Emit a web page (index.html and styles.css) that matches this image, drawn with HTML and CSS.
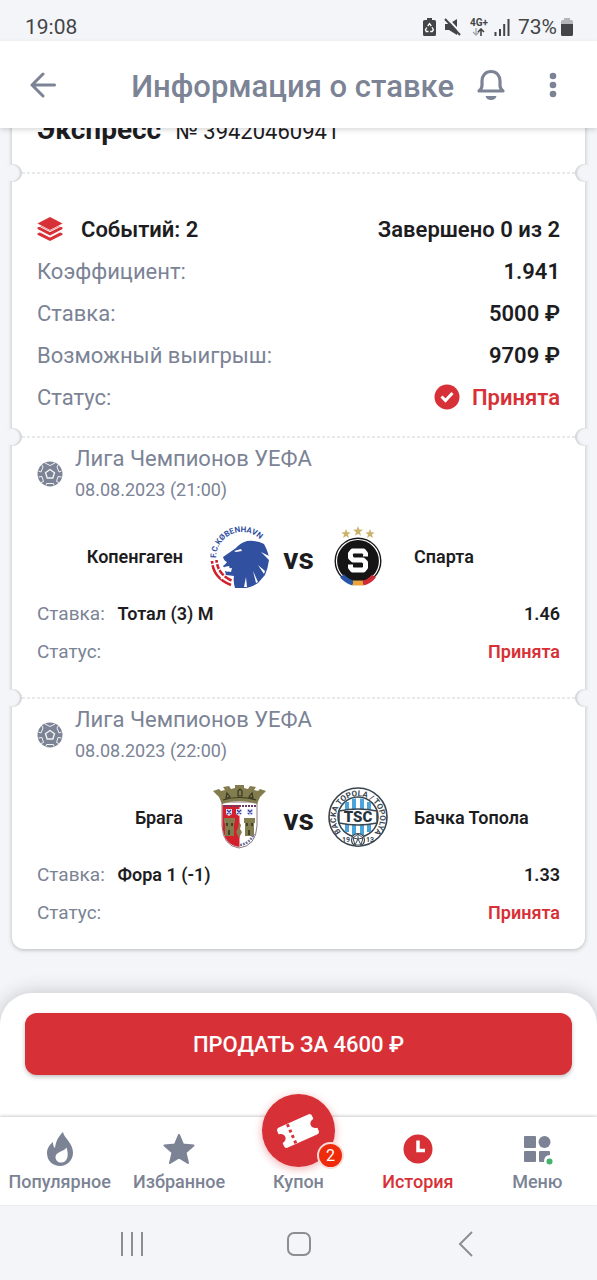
FILE: index.html
```html
<!DOCTYPE html>
<html lang="ru">
<head>
  <meta charset="UTF-8">
  <meta name="viewport" content="width=device-width, initial-scale=1.0">
  <title>Информация о ставке</title>
  <link rel="stylesheet" href="styles.css">
</head>
<body>
  <div class="status-bar">
    <span class="time">19:08</span>
    <div class="status-icons">
      <svg width="13" height="18" viewBox="0 0 13 18">
        <path d="M4 0h5v2h2.500q1.500 0 1.500 1.500v13q0 1.500-1.500 1.500h-10q-1.500 0-1.500-1.500v-13q0-1.500 1.500-1.500h2.500z" fill="#444547"/>
        <path d="M4.700 8l1.800-2.500 1.800 2.500M9 9.300l1.400 2.700-1.200 1.500h-2M5.500 13.500h-2.200l-.8-1.700 1.300-2.300" fill="none" stroke="#fff" stroke-width="1.300"/>
      </svg>
      <svg class="mute" width="18" height="18" viewBox="0 0 18 18">
        <path d="M1 6h4l8-5v16l-8-5h-4z" fill="#444547"/>
        <path d="M3 0l16 17" stroke="#f3f5f8" stroke-width="2"/>
        <path d="M1 1l15 16" stroke="#444547" stroke-width="2"/>
      </svg>
      <div class="network">
        <span>4G+</span>
        <svg width="13" height="8" viewBox="0 0 13 8">
          <path d="M4 0v7M1 4l3 3 3-3" fill="none" stroke="#a3a5a8" stroke-width="1.300"/>
          <path d="M9 8v-7M6 4l3-3 3 3" fill="none" stroke="#444547" stroke-width="1.600"/>
        </svg>
      </div>
      <svg class="signal" width="16" height="17" viewBox="0 0 16 17">
        <path d="M1.500 17v-4M6 17v-7M10.200 17v-12M14.500 17v-17" stroke="#444547" stroke-width="2"/>
      </svg>
      <span class="percent">73%</span>
      <svg class="battery" width="12" height="18" viewBox="0 0 12 18">
        <path d="M3 0h6v2h1.500q1.500 0 1.500 1.500v4h-12v-4q0-1.500 1.500-1.500h1.500z" fill="#b4b6b9"/>
        <path d="M0 6h12v10.500q0 1.500-1.500 1.500h-9q-1.500 0-1.500-1.500z" fill="#444547"/>
      </svg>
    </div>
  </div>

  <header class="header">
    <button class="icon-btn" aria-label="Назад">
      <svg width="26" height="26" viewBox="0 0 26 26" fill="none" stroke="#7b8395" stroke-width="3" stroke-linecap="round" stroke-linejoin="round"><path d="M24.500 13h-22.500M13 2l-11 11 11 11"/></svg>
    </button>
    <h1>Информация о ставке</h1>
    <button class="icon-btn" aria-label="Уведомления">
      <svg width="30" height="32" viewBox="0 0 30 32">
        <path d="M15 2.500c-5.500 0-9 4.200-9 9.500v4.500c0 2.500-1.200 4-3 5.500h24c-1.800-1.500-3-3-3-5.500v-4.500c0-5.300-3.500-9.500-9-9.500z" fill="none" stroke="#7b8395" stroke-width="3.200" stroke-linejoin="round"/>
        <path d="M9.500 27h11q-1 4-5.500 4t-5.500-4z" fill="#7b8395"/>
      </svg>
    </button>
    <button class="icon-btn dots" aria-label="Ещё">
      <svg width="8" height="26" viewBox="0 0 8 26" fill="#7b8395"><circle cx="4" cy="4" r="3.300"/><circle cx="4" cy="13" r="3.300"/><circle cx="4" cy="22" r="3.300"/></svg>
    </button>
  </header>

  <main class="content">
    <article class="ticket">
      <div class="ticket-head">
        <h2>Экспресс</h2>
        <span>№ 39420460941</span>
      </div>

      <section class="part summary">
        <div class="row">
          <strong class="events">
            <svg width="26" height="26" viewBox="0 0 26 26" fill="#d73137">
              <path d="M13 1l12.500 6.500-12.500 6.500-12.500-6.500z"/>
              <path d="M.5 11.500l3.500-1.500 9 4.800 9-4.800 3.500 1.500v1.500l-12.500 6.500-12.500-6.500z"/>
              <path d="M.5 17.500l3-1.500 9.500 5 9.500-5 3 1.500v1.200l-12.500 6.300-12.500-6.300z"/>
              <path d="M0 9l13 6.600 13-6.600M0 14.500l13 6.600 13-6.600" fill="none" stroke="#fff"/>
            </svg>
            Событий: 2
          </strong>
          <strong>Завершено 0 из 2</strong>
        </div>
        <div class="row"><span>Коэффициент:</span><strong>1.941</strong></div>
        <div class="row"><span>Ставка:</span><strong>5000 ₽</strong></div>
        <div class="row"><span>Возможный выигрыш:</span><strong>9709 ₽</strong></div>
        <div class="row">
          <span>Статус:</span>
          <strong class="accepted">
            <svg width="26" height="26" viewBox="0 0 26 26"><circle cx="13" cy="13" r="12.500" fill="#d73137"/><path d="M7.500 12.500l4 4 7-7.500" fill="none" stroke="#fff" stroke-width="3"/></svg>
            Принята
          </strong>
        </div>
      </section>

      <section class="part event">
        <div class="league">
          <svg width="26" height="26" viewBox="0 0 26 26">
            <circle cx="13" cy="13" r="12.500" fill="#7b8395"/>
            <path d="M13 8.500l4.500 3.300-1.700 5.200h-5.600l-1.700-5.200z" fill="none" stroke="#f1f2f4" stroke-width="1.400"/>
            <path d="M8 2l5 2.500 5-2.500M1.500 10l2.500 1 2-5-1-2M24.500 10l-2.500 1-2-5 1-2M4 21.500l2.500-1-1.500-5-3.500.5M22 21.500l-2.500-1 1.500-5 3.500.5M9 24.500l.5-2h7l.5 2" fill="none" stroke="#f1f2f4"/>
          </svg>
          <div>
            <h3>Лига Чемпионов УЕФА</h3>
            <time datetime="2023-08-08T21:00">08.08.2023 (21:00)</time>
          </div>
        </div>
        <div class="teams">
          <span class="home">Копенгаген</span>
          <svg class="logo" viewBox="0 0 60 62">
            <path id="arc-fck" d="M7 33A26 26 0 0 1 59 33" fill="none"/>
            <text font-size="8" font-weight="700" fill="#31509f"><textPath href="#arc-fck">F.C.KØBENHAVN</textPath></text>
            <path d="M3 36q1 17 19 24M7.500 35q1 14 15 20.500" fill="none" stroke="#cf222d" stroke-width="2.600"/>
            <path d="M8 46l6-4M1 40l9-2M12 54l5-5" stroke="#fff" stroke-width="1.500"/>
            <g transform="translate(0 3)">
              <path d="M27 20q4-5 11-7 10-1 17 3 5 9 5 16-1 8-4 15l-7 8q-8 5-13 5h-10q-2-7-1-12l-8-1-1-4 6 1 1-4q-8 1-9-2 3-2 4-4-3-1-4-5z" fill="#31509f"/>
              <path d="M25 23l7-2 1 2-6 1zM60 28l-8-4 8 8zM56 43l-7-6 6 9zM49 54l-5-11 3 12zM38 59l-1-10-2 10zM15 39l5-1 1 3-3 3z" fill="#fff"/>
            </g>
          </svg>
          <span class="vs">vs</span>
          <svg class="logo" viewBox="0 0 60 62">
            <path d="M30 1l1.300 3.500 3.700.2-3 2.300 1 3.700-3-2-3 2 1-3.700-3-2.300 3.700-.2zM18 4l1.300 3.200 3.400.2-2.700 2.200.9 3.400-2.900-2-2.900 2 .9-3.400-2.700-2.200 3.400-.2zM42 4l1.300 3.200 3.400.2-2.700 2.200.9 3.400-2.900-2-2.900 2 .9-3.400-2.700-2.200 3.400-.2z" fill="#cbb26a"/>
            <circle cx="30" cy="36" r="23.500" fill="#151515"/>
            <circle cx="30" cy="36" r="21.500" fill="none" stroke="#fff" stroke-width="1.200"/>
            <path d="M14 51q6 6 11 7" fill="none" stroke="#2855a5" stroke-width="5"/>
            <path d="M25 58h10" stroke="#eba43a" stroke-width="5"/>
            <path d="M35 58q6-1 11-7" fill="none" stroke="#cf2b36" stroke-width="5"/>
            <path d="M37.500 31.500v-3l-2-2.500h-11l-2 2.500v4l2.500 2.500h10l2.500 2.500v5l-2 2.500h-11l-2-2.500v-3" fill="none" stroke="#fff" stroke-width="5" stroke-linejoin="round"/>
          </svg>
          <span class="away">Спарта</span>
        </div>
        <div class="row"><span>Ставка: <strong class="pick">Тотал (3) М</strong></span><strong>1.46</strong></div>
        <div class="row"><span>Статус:</span><strong class="accepted">Принята</strong></div>
      </section>

      <section class="part event">
        <div class="league">
          <svg width="26" height="26" viewBox="0 0 26 26">
            <circle cx="13" cy="13" r="12.500" fill="#7b8395"/>
            <path d="M13 8.500l4.500 3.300-1.700 5.200h-5.600l-1.700-5.200z" fill="none" stroke="#f1f2f4" stroke-width="1.400"/>
            <path d="M8 2l5 2.500 5-2.500M1.500 10l2.500 1 2-5-1-2M24.500 10l-2.500 1-2-5 1-2M4 21.500l2.500-1-1.500-5-3.500.5M22 21.500l-2.500-1 1.500-5 3.500.5M9 24.500l.5-2h7l.5 2" fill="none" stroke="#f1f2f4"/>
          </svg>
          <div>
            <h3>Лига Чемпионов УЕФА</h3>
            <time datetime="2023-08-08T22:00">08.08.2023 (22:00)</time>
          </div>
        </div>
        <div class="teams">
          <span class="home">Брага</span>
          <svg class="logo" viewBox="0 0 60 62">
            <path d="M13 16v24q1 20 17 22 17-2 18-22v-24z" fill="#fff" stroke="#8b7b80"/>
            <path d="M13.500 19h17v42q-16-2-17-21z" fill="#d3212c"/>
            <path d="M15 20h32" stroke="#6a3a68" stroke-width="2" stroke-dasharray="2 1"/>
            <path d="M13 18L10 11 4 5 10 3 12 5 16 4 14 1 20 0 22 3 26 2 26 -1 35 -1 35 2 39 3 41 0 47 1 45 4 49 5 51 3 57 5 51 11 48 18Q30 12 13 18z" fill="#827c4e"/>
            <path d="M18 7l3 4-4 1zM29 5l2-2 2 2v5h-4zM43 7l-3 4 4 1zM14 14q16-5 33 0" fill="none" stroke="#3a3922" stroke-width="1.200"/>
            <path d="M17 23h6v5l-3 2-3-2zM27 23h6v5l-3 2-3-2zM38 23h6v5l-3 2-3-2z" fill="#dfe1f5"/>
            <path d="M18 24l4 4m0-4l-4 4M28 24l4 4m0-4l-4 4M39 24l4 4m0-4l-4 4" stroke="#3940a0" stroke-width="1.300"/>
            <path d="M15 32h11v5h-1v13h-9v-13h-1zM35 32h11v5h-1v13h-9v-13h-1z" fill="#827c4e"/>
            <path d="M18 37v3m5-3v3m-3 4v5M38 37v3m5-3v3m-3 4v5" stroke="#302f20" stroke-width="1.500"/>
            <path d="M30 36l2 3-1 4 2 3-3 6-3-6 2-4z" fill="#8c7952"/>
            <path d="M31 59q9-1 14-11" fill="none" stroke="#77799d" stroke-width="2.500" stroke-dasharray="2 1"/>
          </svg>
          <span class="vs">vs</span>
          <svg class="logo" viewBox="0 0 60 62">
            <circle cx="30" cy="31" r="29" fill="#fff" stroke="#39454f" stroke-width="1.600"/>
            <circle cx="30" cy="31" r="20" fill="#fff" stroke="#39454f" stroke-width="1.500"/>
            <path d="M19 16v30M26 12.500v37M34 12.500v37M41 16v30" stroke="#4ba5db" stroke-width="4"/>
            <path d="M11 25q19-4 38 0v12q-19 4-38 0z" fill="#fff" stroke="#39454f" stroke-width="1.500"/>
            <text x="30" y="36" text-anchor="middle" font-size="15" font-weight="900" fill="#26333d">TSC</text>
            <path id="arc-tsc" d="M13 46A22 22 0 1 1 47 46" fill="none"/>
            <text font-size="8" font-weight="700" fill="#39454f"><textPath href="#arc-tsc">BAČKA TOPOLA / TOPOLYA</textPath></text>
            <text x="14" y="56" font-size="7" font-weight="700" fill="#39454f">19</text>
            <text x="38" y="56" font-size="7" font-weight="700" fill="#39454f">13</text>
            <circle cx="30" cy="54" r="6.500" fill="#fff" stroke="#39454f" stroke-width="1.200"/>
            <path d="M30 48l5 4-2 7h-6l-2-7zM30 48v5l-3 6M30 53l3 6M25 52l5 1 5-1" fill="none" stroke="#39454f"/>
          </svg>
          <span class="away">Бачка Топола</span>
        </div>
        <div class="row"><span>Ставка: <strong class="pick">Фора 1 (-1)</strong></span><strong>1.33</strong></div>
        <div class="row"><span>Статус:</span><strong class="accepted">Принята</strong></div>
      </section>
    </article>
  </main>

  <div class="sheet">
    <button class="sell">ПРОДАТЬ ЗА 4600 ₽</button>
  </div>

  <nav class="tabs">
    <a href="#popular">
      <svg width="34" height="34" viewBox="0 0 34 34"><path d="M20 0c1 6 10 11 10 20.500 0 8-6 13.500-13 13.500s-13-5-13-13c0-5 3-8.500 6-11 0 3 .5 5 2 6 1-7 3-11 8-16z" fill="#7b8395"/><path d="M23.500 15.500c-2 4-11 4-11 9.500 0 3.500 2.500 5.500 5.500 5.500 7 0 8-8 5.500-15z" fill="#fff"/></svg>
      Популярное
    </a>
    <a href="#favorites">
      <svg width="34" height="34" viewBox="0 0 34 34"><path d="M17 3l4 9.500 10.500 1-8 7 2.500 10.500-9-5.500-9 5.500 2.500-10.500-8-7 10.500-1z" fill="#7b8395" stroke="#7b8395" stroke-width="2" stroke-linejoin="round"/></svg>
      Избранное
    </a>
    <a href="#coupon">
      <span class="coupon">
        <svg width="42" height="42" viewBox="0 0 42 42">
          <g transform="rotate(-24 21 21)">
            <path d="M5 10h32q3 0 3 3v3q-5 1-5 5t5 5v3q0 3-3 3h-32q-3 0-3-3v-3q5-1 5-5t-5-5v-3q0-3 3-3z" fill="#fff"/>
            <path d="M14 10.500v21" stroke="#d73137" stroke-width="3" stroke-dasharray="3 3"/>
          </g>
        </svg>
        <span class="badge">2</span>
      </span>
      Купон
    </a>
    <a href="#history" class="active">
      <svg width="34" height="34" viewBox="0 0 34 34"><circle cx="17" cy="17" r="14.500" fill="#d73137"/><path d="M17 8.500v10h7" fill="none" stroke="#fff" stroke-width="3.500"/></svg>
      История
    </a>
    <a href="#menu">
      <svg width="34" height="34" viewBox="0 0 34 34" fill="#7b8395"><rect x="4" y="4" width="12" height="12" rx="1"/><circle cx="24.500" cy="10" r="6"/><rect x="4" y="19" width="12" height="11" rx="1"/><path d="M20 19h9q1 0 1 1v3q-6 0-6 7h-4q-1 0-1-1v-9q0-1 1-1z"/><circle cx="29.500" cy="29.500" r="3" fill="#41b36b"/></svg>
      Меню
    </a>
  </nav>

  <div class="system-nav">
    <button aria-label="Недавние"><svg width="26" height="26" viewBox="0 0 26 26"><path d="M3 1v24M13 1v24M23 1v24" stroke="#8c8e91" stroke-width="2"/></svg></button>
    <button aria-label="Домой"><svg width="26" height="26" viewBox="0 0 26 26"><rect x="2" y="2" width="22" height="22" rx="6" fill="none" stroke="#8c8e91" stroke-width="2"/></svg></button>
    <button aria-label="Назад"><svg width="26" height="26" viewBox="0 0 26 26"><path d="M19 1l-12 12 12 12" fill="none" stroke="#8c8e91" stroke-width="2"/></svg></button>
  </div>
</body>
</html>
```

FILE: styles.css
```css
* {
  box-sizing: border-box;
}

body {
  display: flex;
  flex-direction: column;
  height: 100vh;
  margin: 0;
  background: #f3f5f8;
  color: #1d1d1f;
  font-family: Roboto, "Noto Sans", sans-serif;
}

h1, h2, h3 {
  margin: 0;
}

strong {
  font-weight: 600;
}

svg {
  display: block;
  flex: none;
}

button {
  padding: 0;
  border: 0;
  background: none;
  font-family: inherit;
  cursor: pointer;
}

/* phone status bar */
.status-bar {
  display: flex;
  align-items: center;
  justify-content: space-between;
  flex: none;
  height: 41px;
  padding: 13px 24px 0 25px;
  color: #444547;
  font-size: 21px;
  line-height: 26px;
}

.status-icons {
  display: flex;
  align-items: center;
}

.mute {
  margin: 0 8px;
}

.network {
  display: flex;
  flex-direction: column;
  align-items: center;
  font-size: 10px;
  font-weight: 700;
  line-height: 10px;
}

.signal {
  margin: 0 8px 0 6px;
}

.battery {
  margin-left: 4px;
}

/* header */
.header {
  display: flex;
  align-items: center;
  flex: none;
  position: relative;
  z-index: 1;
  height: 87px;
  padding: 0 40px 0 30px;
  background: #fff;
  box-shadow: 0 2px 5px rgba(0, 0, 0, 0.15);
}

.header h1 {
  flex: 1;
  padding: 4px 22px 0 0;
  color: #7b8395;
  font-size: 31px;
  font-weight: 500;
  line-height: 40px;
  text-align: right;
}

.dots {
  margin-left: 43px;
}

/* ticket */
.content {
  flex: 1;
  min-height: 0;
  padding: 0 12px;
  overflow: hidden;
}

.ticket {
  margin-top: -36px;
  border-radius: 12px;
  background: #fff;
  box-shadow: 0 1px 4px rgba(0, 0, 0, 0.25);
}

.ticket-head {
  display: flex;
  align-items: baseline;
  gap: 14px;
  height: 80px;
  padding: 22px 25px 0;
  font-size: 22px;
  line-height: 32px;
}

.ticket-head h2 {
  font-size: 28px;
  font-weight: 700;
}

.part {
  position: relative;
  padding: 0 25px;
  background: repeating-linear-gradient(90deg, #e9e9eb 0 3px, #fff 3px 5px) top / 100% 2px no-repeat;
}

/* side cut-outs */
.part::before,
.part::after {
  content: "";
  position: absolute;
  top: -8px;
  width: 18px;
  height: 18px;
  border-radius: 50%;
  background: #f3f5f8;
}

.part::before {
  left: -8px;
  box-shadow: inset -2px 0 2px rgba(0, 0, 0, 0.14);
}

.part::after {
  right: -8px;
  box-shadow: inset 2px 0 2px rgba(0, 0, 0, 0.14);
}

.row {
  display: flex;
  align-items: center;
  justify-content: space-between;
  color: #7b8395;
}

.row strong {
  color: #1d1d1f;
}

.row .accepted {
  color: #d73137;
}

.summary {
  padding-top: 36px;
  padding-bottom: 18px;
  font-size: 22px;
}

.summary .row {
  height: 42px;
}

.summary strong {
  display: flex;
  align-items: center;
  gap: 12px;
}

.summary .events {
  gap: 18px;
}

.event {
  padding-top: 7px;
  padding-bottom: 27px;
  font-size: 19px;
}

.event:last-child {
  padding-bottom: 18px;
}

.event .row {
  height: 38px;
}

.event .row strong {
  font-size: 18px;
}

.league {
  display: flex;
  align-items: center;
  gap: 12px;
  color: #7b8395;
}

.league h3 {
  font-size: 22px;
  font-weight: 400;
  line-height: 32px;
}

.league time {
  display: block;
  font-size: 18px;
  line-height: 30px;
}

.teams {
  display: grid;
  grid-template-columns: 1fr 60px 59px 60px 1fr;
  align-items: center;
  height: 89px;
  padding-top: 20px;
  padding-bottom: 7px;
  font-size: 18px;
  font-weight: 600;
}

.home {
  padding-right: 26px;
  text-align: right;
}

.away {
  padding-left: 26px;
}

.logo {
  width: 60px;
  height: 62px;
  overflow: visible;
}

.vs {
  padding-top: 6px;
  font-size: 30px;
  font-weight: 700;
  line-height: 32px;
  text-align: center;
}

.pick {
  margin-left: 8px;
}

/* sell panel */
.sheet {
  flex: none;
  position: relative;
  padding: 20px 25px 42px;
  border-radius: 32px 32px 0 0;
  background: #fff;
  box-shadow: 0 0 20px rgba(0, 0, 0, 0.2);
}

.sell {
  display: block;
  width: 100%;
  height: 62px;
  border-radius: 12px;
  background: #d73137;
  box-shadow: 0 2px 4px rgba(0, 0, 0, 0.25);
  color: #fff;
  font-size: 22px;
  font-weight: 500;
}

/* bottom tabs */
.tabs {
  display: grid;
  grid-template-columns: repeat(5, 1fr);
  flex: none;
  position: relative;
  height: 88px;
  background: #fff;
  box-shadow: 0 -1px 3px rgba(0, 0, 0, 0.2);
}

.tabs a {
  display: flex;
  flex-direction: column;
  align-items: center;
  justify-content: flex-end;
  gap: 4px;
  position: relative;
  padding-bottom: 11px;
  color: #7b8395;
  font-size: 18px;
  font-weight: 500;
  line-height: 24px;
  text-decoration: none;
}

.tabs .active {
  color: #d73137;
}

.coupon {
  display: flex;
  align-items: center;
  justify-content: center;
  position: absolute;
  top: -23px;
  width: 73px;
  height: 73px;
  border-radius: 50%;
  background: #d73137;
  box-shadow: 0 2px 8px rgba(215, 49, 55, 0.4);
}

.badge {
  position: absolute;
  right: -9px;
  bottom: -2px;
  width: 27px;
  height: 27px;
  border: 2px solid #fbdcd9;
  border-radius: 50%;
  background: #ee2b0b;
  color: #fff;
  font-size: 16px;
  font-weight: 400;
  line-height: 23px;
  text-align: center;
}

.system-nav {
  display: flex;
  align-items: center;
  justify-content: center;
  gap: 141px;
  flex: none;
  height: 75px;
  padding-top: 3px;
}
```
